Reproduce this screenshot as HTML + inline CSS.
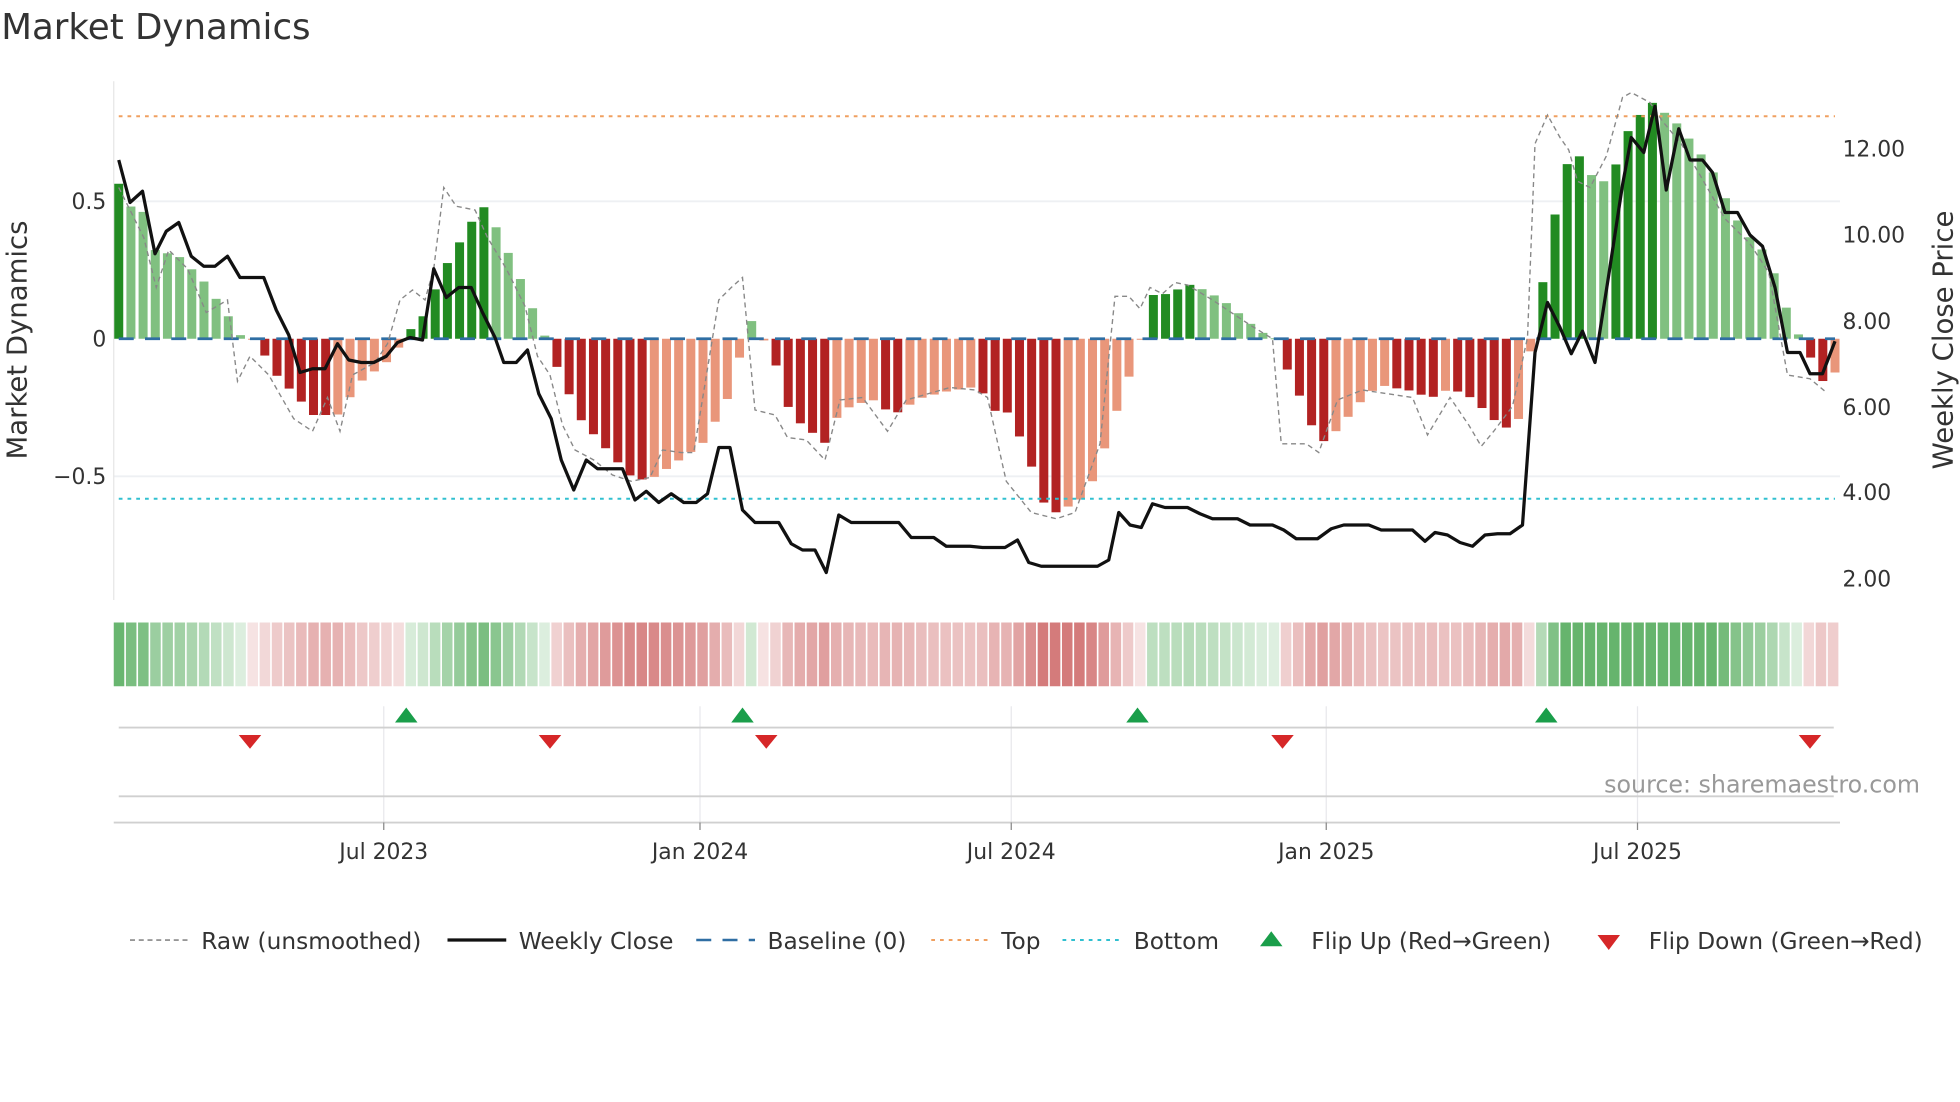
<!DOCTYPE html>
<html><head><meta charset="utf-8">
<style>
html,body{margin:0;padding:0;background:#fff;width:1960px;height:1102px;overflow:hidden}
svg{display:block;font-family:"DejaVu Sans","Liberation Sans",sans-serif}
</style></head>
<body>
<svg id="s" width="1960" height="1102" viewBox="0 0 1568 881.6" xmlns="http://www.w3.org/2000/svg">
<rect width="1568" height="882" fill="#fff"/>
<text x="1" y="31" font-size="28.5" fill="#333">Market Dynamics</text>
<line x1="91" y1="161" x2="1472" y2="161" stroke="#eef0f3" stroke-width="1.5"/>
<line x1="91" y1="381" x2="1472" y2="381" stroke="#eef0f3" stroke-width="1.5"/>
<line x1="91" y1="65" x2="91" y2="480" stroke="#e6e6e6" stroke-width="1"/>
<g id="bars"></g>
<line x1="95" y1="271" x2="1468" y2="271" stroke="#2f6ea3" stroke-width="2.2" stroke-dasharray="12,9"/>
<line x1="95" y1="93" x2="1468" y2="93" stroke="#f0a060" stroke-width="1.6" stroke-dasharray="3,4"/>
<line x1="95" y1="399" x2="1468" y2="399" stroke="#30c0d0" stroke-width="1.6" stroke-dasharray="3,4"/>
<polyline id="raw" fill="none" stroke="#888" stroke-width="1.1" stroke-dasharray="4,3"/>
<polyline id="price" fill="none" stroke="#111" stroke-width="2.6" stroke-linejoin="round"/>
<g font-size="17.5" fill="#333">
<text x="85" y="167" text-anchor="end">0.5</text>
<text x="85" y="277" text-anchor="end">0</text>
<text x="85" y="387" text-anchor="end">−0.5</text>
<text x="1474" y="125">12.00</text>
<text x="1474" y="194">10.00</text>
<text x="1474" y="263">8.00</text>
<text x="1474" y="332">6.00</text>
<text x="1474" y="400">4.00</text>
<text x="1474" y="469">2.00</text>
</g>
<text transform="translate(21,272) rotate(-90)" font-size="22" fill="#333" text-anchor="middle">Market Dynamics</text>
<text transform="translate(1562,272) rotate(-90)" font-size="22" fill="#333" text-anchor="middle">Weekly Close Price</text>
<g id="strip"></g>
<g stroke="#e8e8ec" stroke-width="1">
<line x1="307" y1="565" x2="307" y2="658"/><line x1="560" y1="565" x2="560" y2="658"/>
<line x1="809" y1="565" x2="809" y2="658"/><line x1="1061" y1="565" x2="1061" y2="658"/>
<line x1="1310" y1="565" x2="1310" y2="658"/>
</g>
<line x1="95" y1="582" x2="1467" y2="582" stroke="#d0d0d0" stroke-width="1.5"/>
<line x1="95" y1="637" x2="1467" y2="637" stroke="#d0d0d0" stroke-width="1.5"/>
<line x1="91" y1="658" x2="1472" y2="658" stroke="#d0d0d0" stroke-width="1.5"/>
<g fill="#1a9e4a">
<polygon points="316,578 334,578 325,566"/><polygon points="585,578 603,578 594,566"/>
<polygon points="901,578 919,578 910,566"/><polygon points="1228,578 1246,578 1237,566"/>
</g>
<g fill="#d62728">
<polygon points="191,588 209,588 200,599"/><polygon points="431,588 449,588 440,599"/>
<polygon points="604,588 622,588 613,599"/><polygon points="1017,588 1035,588 1026,599"/>
<polygon points="1439,588 1457,588 1448,599"/>
</g>
<text x="1536" y="634" font-size="19" fill="#999" text-anchor="end">source: sharemaestro.com</text>
<g stroke="#888" stroke-width="1"><line x1="307" y1="658" x2="307" y2="664"/><line x1="560" y1="658" x2="560" y2="664"/><line x1="809" y1="658" x2="809" y2="664"/><line x1="1061" y1="658" x2="1061" y2="664"/><line x1="1310" y1="658" x2="1310" y2="664"/></g>
<g font-size="17.5" fill="#333" text-anchor="middle">
<text x="307" y="687">Jul 2023</text><text x="560" y="687">Jan 2024</text>
<text x="809" y="687">Jul 2024</text><text x="1061" y="687">Jan 2025</text>
<text x="1310" y="687">Jul 2025</text>
</g>
<g font-size="18.6" fill="#333">
<line x1="104" y1="752" x2="150" y2="752" stroke="#888" stroke-width="1.3" stroke-dasharray="4,3"/>
<text x="161" y="759">Raw (unsmoothed)</text>
<line x1="358" y1="752" x2="405" y2="752" stroke="#111" stroke-width="2.6"/>
<text x="415" y="759">Weekly Close</text>
<line x1="557" y1="752" x2="604" y2="752" stroke="#2f6ea3" stroke-width="2" stroke-dasharray="12,9"/>
<text x="614" y="759">Baseline (0)</text>
<line x1="745" y1="752" x2="791" y2="752" stroke="#f0a060" stroke-width="1.6" stroke-dasharray="3,4"/>
<text x="801" y="759">Top</text>
<line x1="850" y1="752" x2="897" y2="752" stroke="#30c0d0" stroke-width="1.6" stroke-dasharray="3,4"/>
<text x="907" y="759">Bottom</text>
<polygon points="1008,757 1026,757 1017,745" fill="#1a9e4a"/>
<text x="1049" y="759">Flip Up (Red→Green)</text>
<polygon points="1278,748 1296,748 1287,760" fill="#d62728"/>
<text x="1319" y="759">Flip Down (Green→Red)</text>
</g>
</svg>
<script>
var NS="http://www.w3.org/2000/svg";
var mom=[[95,147],[104,165],[114,168],[124,200],[143,205],[163,225],[182,252],[192,268],[202,271],[211,283],[221,300],[240,320],[250,332],[270,332],[289,305],[309,290],[318,280],[324,268],[338,254],[357,212],[377,178],[386,164],[396,180],[415,220],[435,268],[440,271],[444,290],[464,335],[484,358],[503,380],[518,385],[532,376],[562,355],[581,322],[591,290],[594,271],[597,255],[604,258],[610,271],[614,276],[624,300],[633,335],[643,340],[652,348],[662,356],[671,330],[681,325],[690,322],[700,320],[709,328],[719,330],[729,323],[738,318],[758,313],[777,310],[787,315],[797,330],[806,330],[816,350],[826,375],[835,402],[845,410],[855,405],[864,400],[874,385],[884,358],[893,330],[903,302],[913,271],[920,236],[930,236],[940,233],[949,227],[959,230],[969,235],[978,240],[988,248],[998,257],[1008,265],[1017,270],[1022,271],[1027,290],[1037,310],[1046,333],[1056,355],[1066,348],[1075,338],[1085,325],[1095,315],[1104,308],[1114,310],[1124,312],[1133,313],[1143,320],[1153,313],[1162,312],[1172,315],[1182,322],[1191,333],[1201,340],[1211,345],[1218,327],[1226,271],[1237,211],[1247,155],[1257,120],[1266,127],[1276,145],[1286,145],[1296,125],[1305,97],[1315,90],[1324,80],[1333,92],[1343,100],[1352,112],[1362,125],[1372,140],[1381,160],[1391,178],[1400,190],[1410,200],[1420,220],[1429,246],[1439,268],[1448,285],[1458,305],[1468,298]];
function interp(a,x){if(x<=a[0][0])return a[0][1];for(var i=1;i<a.length;i++){if(x<=a[i][0]){var t=(x-a[i-1][0])/(a[i][0]-a[i-1][0]);return a[i-1][1]+t*(a[i][1]-a[i-1][1]);}}return a[a.length-1][1];}
var N=142,x0=95,dx=(1468-95)/(N-1),vals=[];
for(var i=0;i<N;i++)vals.push(interp(mom,x0+i*dx));
var bars=document.getElementById('bars'),strip=document.getElementById('strip');
for(var i=0;i<N;i++){var x=x0+i*dx,y=vals[i],v=(271-y)/220,prev=i?(271-vals[i-1])/220:v;
 var rising=Math.abs(v)>=Math.abs(prev)-0.001,col;
 if(v>=0)col=rising?'#228b22':'#80c080';else col=rising?'#b22222':'#e9967a';
 var r=document.createElementNS(NS,'rect');r.setAttribute('x',x-3.6);r.setAttribute('width',7.2);
 r.setAttribute('y',Math.min(y,271));r.setAttribute('height',Math.max(Math.abs(y-271),0.8));r.setAttribute('fill',col);bars.appendChild(r);
 var sx=91+i*(1472-91)/N,a=Math.min(0.2+Math.abs(v)*1.3,0.95);
 var c=v>=0?[40,150,50]:[195,70,70];
 var cc=c.map(function(k){return Math.round(255-(255-k)*a*0.75)});
 var s=document.createElementNS(NS,'rect');s.setAttribute('x',sx);s.setAttribute('width',(1472-91)/N-1.3);s.setAttribute('y',498);s.setAttribute('height',51);s.setAttribute('fill','rgb('+cc.join(',')+')');strip.appendChild(s);}
var price=[[95,128],[104,162],[114,153],[124,203],[133,185],[143,178],[153,205],[163,213],[172,213],[182,205],[192,222],[211,222],[221,248],[231,268],[240,298],[250,295],[260,295],[270,275],[279,288],[289,290],[299,290],[309,285],[318,274],[328,270],[338,272],[347,215],[357,238],[367,230],[377,230],[386,250],[396,270],[403,290],[413,290],[422,280],[431,315],[441,335],[449,368],[459,392],[469,368],[478,375],[498,375],[508,400],[517,393],[527,402],[537,395],[547,402],[557,402],[566,395],[575,358],[584,358],[594,408],[604,418],[623,418],[633,435],[642,440],[652,440],[661,458],[671,412],[681,418],[719,418],[729,430],[747,430],[757,437],[776,437],[786,438],[804,438],[814,432],[823,450],[833,453],[878,453],[887,448],[895,410],[904,420],[913,422],[922,403],[932,406],[950,406],[960,411],[970,415],[990,415],[1000,420],[1018,420],[1027,424],[1037,431],[1054,431],[1065,423],[1075,420],[1095,420],[1105,424],[1130,424],[1140,433],[1148,426],[1158,428],[1168,434],[1178,437],[1188,428],[1198,427],[1208,427],[1218,420],[1228,282],[1238,242],[1248,262],[1257,283],[1266,265],[1276,290],[1287,220],[1298,148],[1305,110],[1315,122],[1324,85],[1333,152],[1343,103],[1352,128],[1362,128],[1370,138],[1380,170],[1390,170],[1400,188],[1410,197],[1420,230],[1430,282],[1440,282],[1448,299],[1458,299],[1468,273]];
var raw=[[95,150],[100,160],[115,190],[125,230],[135,200],[150,215],[165,250],[182,240],[190,305],[200,285],[215,300],[235,335],[250,345],[262,318],[272,345],[282,300],[300,290],[310,275],[320,240],[330,232],[340,240],[347,215],[355,150],[365,165],[380,168],[390,190],[405,215],[420,245],[430,285],[440,300],[450,340],[460,360],[475,368],[490,380],[505,385],[520,382],[530,360],[545,362],[555,362],[575,240],[585,230],[594,222],[604,328],[620,332],[630,350],[645,352],[660,368],[672,320],[690,318],[710,345],[725,320],[760,310],[780,312],[790,318],[805,385],[825,410],[845,415],[860,410],[880,355],[892,237],[903,237],[912,247],[920,230],[930,235],[940,226],[950,228],[970,240],[1000,260],[1018,271],[1025,355],[1045,355],[1055,362],[1070,320],[1090,312],[1110,315],[1130,318],[1142,348],[1160,318],[1175,340],[1185,357],[1195,345],[1210,325],[1222,270],[1228,115],[1238,92],[1248,110],[1255,120],[1262,145],[1272,150],[1285,125],[1298,78],[1305,74],[1320,82],[1330,97],[1345,115],[1360,140],[1380,175],[1400,195],[1415,218],[1430,300],[1448,303],[1460,313]];
function pts(a){return a.map(function(p){return p[0]+','+p[1]}).join(' ')}
document.getElementById('price').setAttribute('points',pts(price));
document.getElementById('raw').setAttribute('points',pts(raw));
</script>
</body></html>
